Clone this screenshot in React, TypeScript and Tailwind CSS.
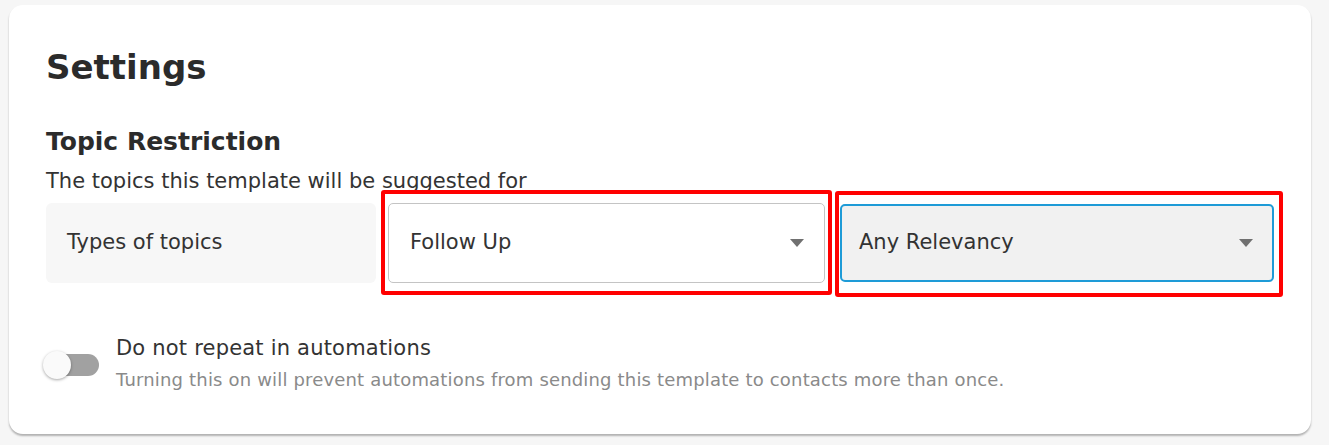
import { useState } from "react";

const FONT = { fontFamily: '"DejaVu Sans", "Noto Sans", sans-serif' };

function Caret() {
  return (
    <svg width="14" height="8" viewBox="0 0 14 8" className="shrink-0">
      <path d="M0 0h14L7 8z" fill="#707070" />
    </svg>
  );
}

function Select({ value, focused }: { value: string; focused?: boolean }) {
  return (
    <div
      className={
        focused
          ? "flex h-[78px] items-center justify-between rounded-[5px] border-2 border-[#1e9bd7] bg-[#f1f1f1] pl-[17px] pr-[19px]"
          : "flex h-[80px] items-center justify-between rounded-[5px] border border-[#c4c4c4] bg-white pl-[21px] pr-[20px]"
      }
    >
      <span className="text-[21px] text-[#333]">{value}</span>
      <Caret />
    </div>
  );
}

export default function App() {
  const [noRepeat, setNoRepeat] = useState(false);

  return (
    <div className="min-h-[445px] bg-[#f6f6f6] pl-[9px] pr-[18px] pt-[5px]" style={FONT}>
      <div className="rounded-[14px] bg-white px-[37px] pb-[43px] pt-[40px] shadow-[0_2px_2px_rgba(0,0,0,0.28)]">
        <h1 className="text-[34px] font-bold leading-[44px] text-[#2b2b2b]">Settings</h1>

        <h2 className="mt-[37px] text-[25px] font-bold leading-[32px] text-[#2b2b2b]">Topic Restriction</h2>
        <p className="mt-[9px] text-[21px] leading-[28px] text-[#333]">The topics this template will be suggested for</p>

        <div className="mt-[8px] flex items-center">
          <div className="flex h-[80px] w-[330px] items-center rounded-[6px] bg-[#f7f7f7] pl-[21px]">
            <span className="text-[21px] text-[#333]">Types of topics</span>
          </div>
          <div className="relative ml-[12px] flex-1">
            <span className="pointer-events-none absolute -bottom-[12px] -left-[7px] -right-[7px] -top-[13px] rounded-[3px] border-4 border-[#ff0000]" />
            <Select value="Follow Up" />
          </div>
          <div className="relative ml-[15px] w-[434px]">
            <span className="pointer-events-none absolute -bottom-[15px] -left-[5px] -right-[9px] -top-[13px] rounded-[3px] border-4 border-[#ff0000]" />
            <Select value="Any Relevancy" focused />
          </div>
        </div>

        <div className="mt-[52px] flex items-start">
          <button
            type="button"
            onClick={() => setNoRepeat(!noRepeat)}
            className="relative mt-[16px] h-[28px] w-[56px] shrink-0 -ml-[3px]"
          >
            <span className="absolute left-[5px] right-0 top-[3px] h-[22px] rounded-full bg-[#a1a1a1]" />
            <span className="absolute left-0 top-0 h-[28px] w-[28px] rounded-full bg-[#fafafa] shadow-[0_1px_3px_rgba(0,0,0,0.35)]" />
          </button>
          <div className="ml-[17px]">
            <div className="text-[21px] leading-[26px] tracking-[0.2px] text-[#333]">Do not repeat in automations</div>
            <div className="mt-[8px] text-[18px] leading-[22px] tracking-[0.17px] text-[#8a8a8a]">
              Turning this on will prevent automations from sending this template to contacts more than once.
            </div>
          </div>
        </div>
      </div>
    </div>
  );
}
